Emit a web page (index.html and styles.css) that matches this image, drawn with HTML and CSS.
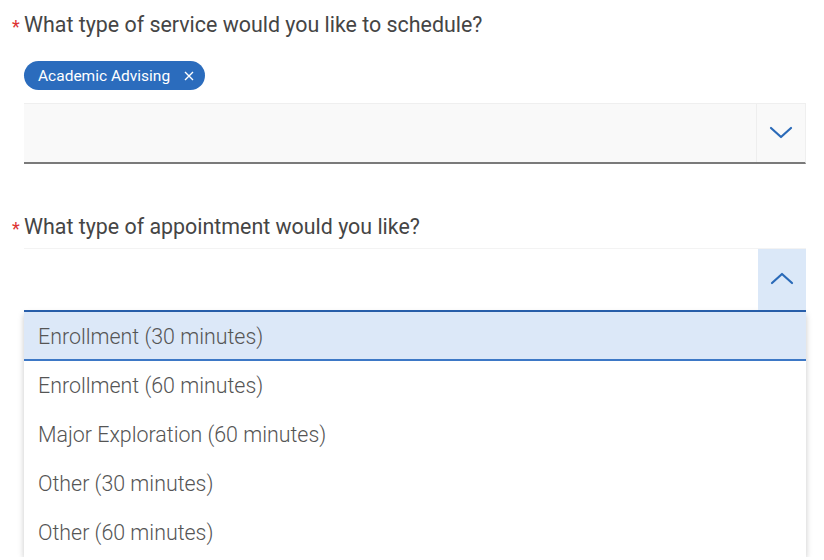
FILE: index.html
```html
<!DOCTYPE html>
<html>
<head>
<meta charset="utf-8">
<link rel="stylesheet" href="styles.css">
</head>
<body>
<div class="page">
  <div class="field">
    <div class="label"><span class="req">*</span><span class="label-text">What type of service would you like to schedule?</span></div>
    <div class="chips">
      <span class="chip">Academic Advising <span class="chip-x">
        <svg width="10" height="10" viewBox="0 0 10 10"><path d="M1 1L9 9M9 1L1 9" stroke="#fff" stroke-width="1.4" fill="none"/></svg>
      </span></span>
    </div>
    <div class="select closed">
      <div class="select-input"></div>
      <div class="select-btn">
        <svg width="24" height="14" viewBox="0 0 24 14"><path d="M2 2L12 11L22 2" stroke="#2a6ab8" stroke-width="2.2" fill="none" stroke-linecap="round" stroke-linejoin="round"/></svg>
      </div>
    </div>
  </div>
  <div class="field second">
    <div class="label"><span class="req">*</span><span class="label-text">What type of appointment would you like?</span></div>
    <div class="select-wrap">
      <div class="select open">
        <div class="select-input"></div>
        <div class="select-btn">
          <svg width="24" height="14" viewBox="0 0 24 14"><path d="M2 12L12 3L22 12" stroke="#2a6ab8" stroke-width="2.2" fill="none" stroke-linecap="round" stroke-linejoin="round"/></svg>
        </div>
      </div>
      <div class="menu">
        <div class="opt active">Enrollment (30 minutes)</div>
        <div class="opt">Enrollment (60 minutes)</div>
        <div class="opt">Major Exploration (60 minutes)</div>
        <div class="opt">Other (30 minutes)</div>
        <div class="opt">Other (60 minutes)</div>
      </div>
    </div>
  </div>
</div>
</body>
</html>
```
FILE: styles.css
```css
html, body {
  margin: 0;
  padding: 0;
  background: #fff;
  font-family: Roboto, "Liberation Sans", sans-serif;
}
.page {
  padding: 12px 18px 0 12px;
}
.label {
  display: flex;
  align-items: baseline;
  height: 27px;
  font-size: 21.4px;
  color: #454545;
}
.req {
  color: #d33;
  font-size: 18px;
  width: 12px;
  position: relative;
  top: 1px;
}
.chips {
  padding: 22px 0 13px 12px;
}
.chip {
  display: inline-flex;
  align-items: center;
  height: 29px;
  padding: 0 11px 0 14px;
  border-radius: 15px;
  background: #2b6cbd;
  color: #fff;
  font-size: 15.5px;
}
.chip-x {
  display: inline-flex;
  margin-left: 14px;
}
.select {
  margin-left: 12px;
  display: flex;
  height: 61px;
  box-sizing: border-box;
}
.select.closed {
  background: #f9f9f9;
  border-top: 1px solid #efefef;
  border-right: 1px solid #efefef;
  border-bottom: 2px solid #7a7a7a;
}
.select.closed .select-btn {
  border-left: 1px solid #eeeeee;
}
.select-input {
  flex: 1;
}
.select-btn {
  width: 48px;
  display: flex;
  align-items: center;
  justify-content: center;
}
.field.second {
  margin-top: 50px;
}
.field.second .label {
  margin-bottom: 7px;
}
.select-wrap {
  margin-left: 12px;
}
.select-wrap .select {
  margin-left: 0;
}
.select.open {
  height: 64px;
  background: #fff;
  border-top: 1px solid #f3f3f3;
  border-bottom: 2px solid #2a62b0;
}
.select.open .select-btn {
  background: #dbe8f8;
  padding-bottom: 4px;
}
.menu {
  background: #fff;
  box-shadow: 0 2px 6px rgba(0, 0, 0, 0.22);
}
.opt {
  height: 49px;
  box-sizing: border-box;
  padding-left: 14px;
  display: flex;
  align-items: center;
  font-size: 21.4px;
  color: #555;
  font-weight: 300;
}
.opt.active {
  background: #dce8f8;
  border-bottom: 2px solid #3d78c6;
  height: 49px;
  padding-top: 1px;
}
```
